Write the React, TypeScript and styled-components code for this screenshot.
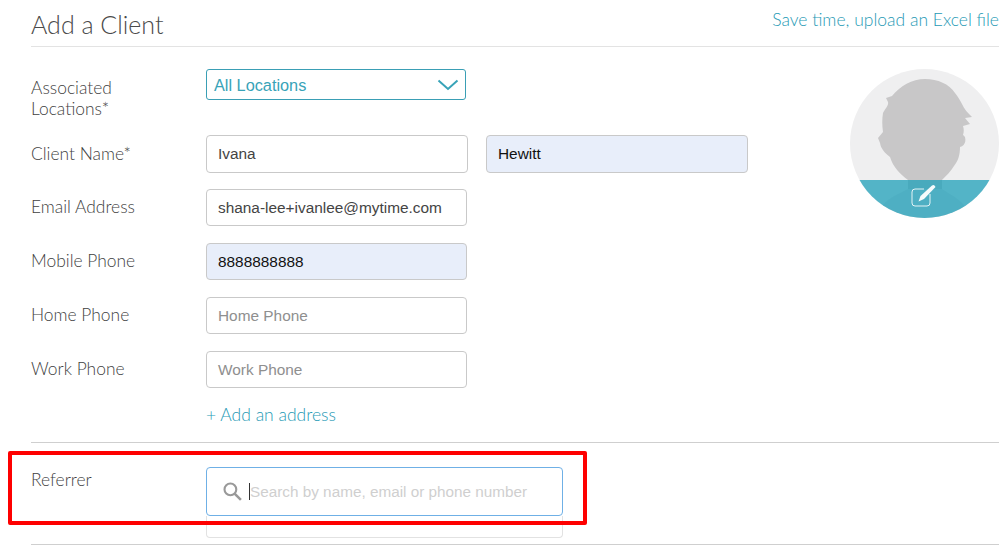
import React, { FC } from 'react';
import styled, { createGlobalStyle } from 'styled-components';

const GlobalStyle = createGlobalStyle`
  html, body {
    margin: 0;
    background: #fff;
  }
  body {
    font-family: Lato, "Open Sans", sans-serif;
    color: #5b5b5b;
  }
`;

const ClientAvatar: FC = () => (
  <AvatarWrap>
    <svg width="149" height="149" viewBox="0 0 149 149">
      <defs>
        <clipPath id="avatarClip">
          <circle cx="74.5" cy="74.5" r="74.5" />
        </clipPath>
      </defs>
      <g clipPath="url(#avatarClip)">
        <rect width="149" height="149" fill="#efeff0" />
        <path d="M58 120 C48 125 38 129 33 136 L30 149 H118 L114 136 C108 129 100 125 92 120 Z" fill="#dcdcdd" />
        <path
          d="M75 10 C88 10 99 15 105 24 C108 28 110 31 112 35 C114 40 118 44 122 48 L115 49 L120 55 L113 57 C114 60 114 63 113 66 C117 68 116 77 110 78 C110 86 108 92 104 97 C101 102 96 107 92 111 L92 120 H58 V111 C50 105 43 98 40 88 C35 84 31 80 30 74 L28 69 L33 63 C32 56 32 50 33 44 C35 40 39 36 38 33 L36 29 L42 27 C50 17 62 10 75 10 Z"
          fill="#c8c7c8"
        />
        <rect y="111" width="149" height="38" fill="#1fa0ba" opacity="0.75" />
        <path
          d="M74 120 H65 Q62 120 62 123 V134 Q62 137 65 137 H77 Q80 137 80 134 V125"
          fill="none"
          stroke="#fff"
          strokeWidth="1"
          opacity="0.85"
        />
        <path d="M68.5 132.5 L70.5 127 L82 116.5 Q83.5 115.5 84.5 116.5 L85.5 118 L74 130 Z" fill="#fff" opacity="0.95" />
      </g>
    </svg>
  </AvatarWrap>
);

const App: FC = () => {
  return (
    <Page>
      <GlobalStyle />
      <Header>
        <Title>Add a Client</Title>
        <UploadLink>Save time, upload an Excel file</UploadLink>
      </Header>
      <Body>
        <Fields>
          <LocationRow>
            <Label>Associated<br />Locations*</Label>
            <SelectBox>
              <span>All Locations</span>
              <svg width="22" height="12" viewBox="0 0 22 12">
                <path d="M1.5 1.5 L11 10 L20.5 1.5" fill="none" stroke="#38a3b8" strokeWidth="2" />
              </svg>
            </SelectBox>
          </LocationRow>
          <NameRow>
            <Label>Client Name*</Label>
            <TextBox $wide>Ivana</TextBox>
            <LastName>
              <TextBox $wide $filled>Hewitt</TextBox>
            </LastName>
          </NameRow>
          <Row>
            <Label>Email Address</Label>
            <TextBox>shana-lee+ivanlee@mytime.com</TextBox>
          </Row>
          <Row>
            <Label>Mobile Phone</Label>
            <TextBox $filled>8888888888</TextBox>
          </Row>
          <Row>
            <Label>Home Phone</Label>
            <TextBox $placeholder>Home Phone</TextBox>
          </Row>
          <Row>
            <Label>Work Phone</Label>
            <TextBox $placeholder>Work Phone</TextBox>
          </Row>
          <AddAddress>+ Add an address</AddAddress>
        </Fields>
        <ClientAvatar />
      </Body>
      <ReferrerSection>
        <ReferrerLabel>Referrer</ReferrerLabel>
        <SearchColumn>
          <SearchBox>
            <svg width="21" height="21" viewBox="0 0 20 20">
              <circle cx="8" cy="8" r="5.6" fill="none" stroke="#999" strokeWidth="2" />
              <path d="M12 12 L18 18" stroke="#999" strokeWidth="2.4" />
            </svg>
            <Caret />
            <SearchHint>Search by name, email or phone number</SearchHint>
          </SearchBox>
          <ResultsStub />
        </SearchColumn>
        <Highlight />
      </ReferrerSection>
    </Page>
  );
};

const Page = styled.div`
  width: 968px;
  height: 549px;
  margin-left: 31px;
  overflow: visible;
`;

const Header = styled.div`
  display: flex;
  justify-content: space-between;
  height: 46px;
  border-bottom: 1px solid #e3e3e3;
`;

const Title = styled.div`
  font-size: 25px;
  font-weight: 300;
  line-height: 49px;
  color: #4a4a4a;
`;

const UploadLink = styled.div`
  font-size: 17.5px;
  font-weight: 300;
  line-height: 39px;
  color: #1f9ab5;
`;

const Body = styled.div`
  display: flex;
  justify-content: space-between;
  padding-top: 22px;
`;

const Fields = styled.div`
  display: flex;
  flex-direction: column;
`;

const Row = styled.div`
  display: flex;
  align-items: center;
  height: 37px;
  margin-bottom: 17px;
`;

const NameRow = styled(Row)`
  height: 38px;
  margin-bottom: 16px;
`;

const LocationRow = styled(Row)`
  align-items: flex-start;
  height: 66px;
  margin-bottom: 0;
`;

const Label = styled.div`
  width: 175px;
  flex-shrink: 0;
  margin-top: -2px;
  font-size: 17.4px;
  font-weight: 300;
  line-height: 21px;
  color: #3f3f3f;

  ${LocationRow} & {
    margin-top: 0;
    padding-top: 8px;
  }
`;

const SelectBox = styled.div`
  box-sizing: border-box;
  display: flex;
  align-items: center;
  justify-content: space-between;
  width: 260px;
  height: 31px;
  padding: 1px 6px 0 7px;
  border: 1px solid #3a9fb5;
  border-radius: 3px;
  font-family: "Liberation Sans", Arial, sans-serif;
  font-size: 16.3px;
  color: #38a3b8;
`;

const TextBox = styled.div<{ $wide?: boolean; $filled?: boolean; $placeholder?: boolean }>`
  box-sizing: border-box;
  display: flex;
  align-items: center;
  width: ${(p) => (p.$wide ? '262px' : '261px')};
  height: 100%;
  padding-left: 11px;
  border: 1px solid #c9c9c9;
  border-radius: 4px;
  background: ${(p) => (p.$filled ? '#e8eefa' : '#fff')};
  font-family: "Liberation Sans", Arial, sans-serif;
  font-size: 15.4px;
  color: ${(p) => (p.$placeholder ? '#8f8f8f' : p.$filled ? '#111' : '#444')};
`;

const LastName = styled.div`
  height: 100%;
  margin-left: 18px;
`;

const AddAddress = styled.div`
  margin: 0 0 0 175px;
  font-size: 17.5px;
  font-weight: 300;
  line-height: 20px;
  color: #1f9ab5;
`;

const AvatarWrap = styled.div`
  width: 149px;
  height: 149px;
`;

const ReferrerSection = styled.div`
  position: relative;
  display: flex;
  height: 101px;
  margin-top: 17px;
  border-top: 1px solid #cfcfcf;
  border-bottom: 1px solid #cfcfcf;
`;

const ReferrerLabel = styled.div`
  width: 175px;
  padding-top: 26px;
  font-size: 17.4px;
  font-weight: 300;
  line-height: 21px;
  color: #3f3f3f;
`;

const SearchColumn = styled.div`
  display: flex;
  flex-direction: column;
  width: 357px;
  padding-top: 24px;
`;

const SearchBox = styled.div`
  box-sizing: border-box;
  display: flex;
  align-items: center;
  height: 49px;
  padding-left: 15px;
  border: 1px solid #6fb0e6;
  border-radius: 4px;
`;

const Caret = styled.span`
  width: 1px;
  height: 17px;
  margin-left: 6px;
  background: #333;
`;

const SearchHint = styled.span`
  font-family: "Liberation Sans", Arial, sans-serif;
  font-size: 15.3px;
  color: #cfcfcf;
`;

const ResultsStub = styled.div`
  box-sizing: border-box;
  height: 22px;
  border: 1px solid #e2e2e2;
  border-top: none;
  border-radius: 0 0 4px 4px;
`;

const Highlight = styled.div`
  position: absolute;
  left: -23px;
  top: 8px;
  box-sizing: border-box;
  width: 579px;
  height: 74px;
  border: 4px solid #fe0000;
  border-radius: 2px;
  pointer-events: none;
`;

export default App;
